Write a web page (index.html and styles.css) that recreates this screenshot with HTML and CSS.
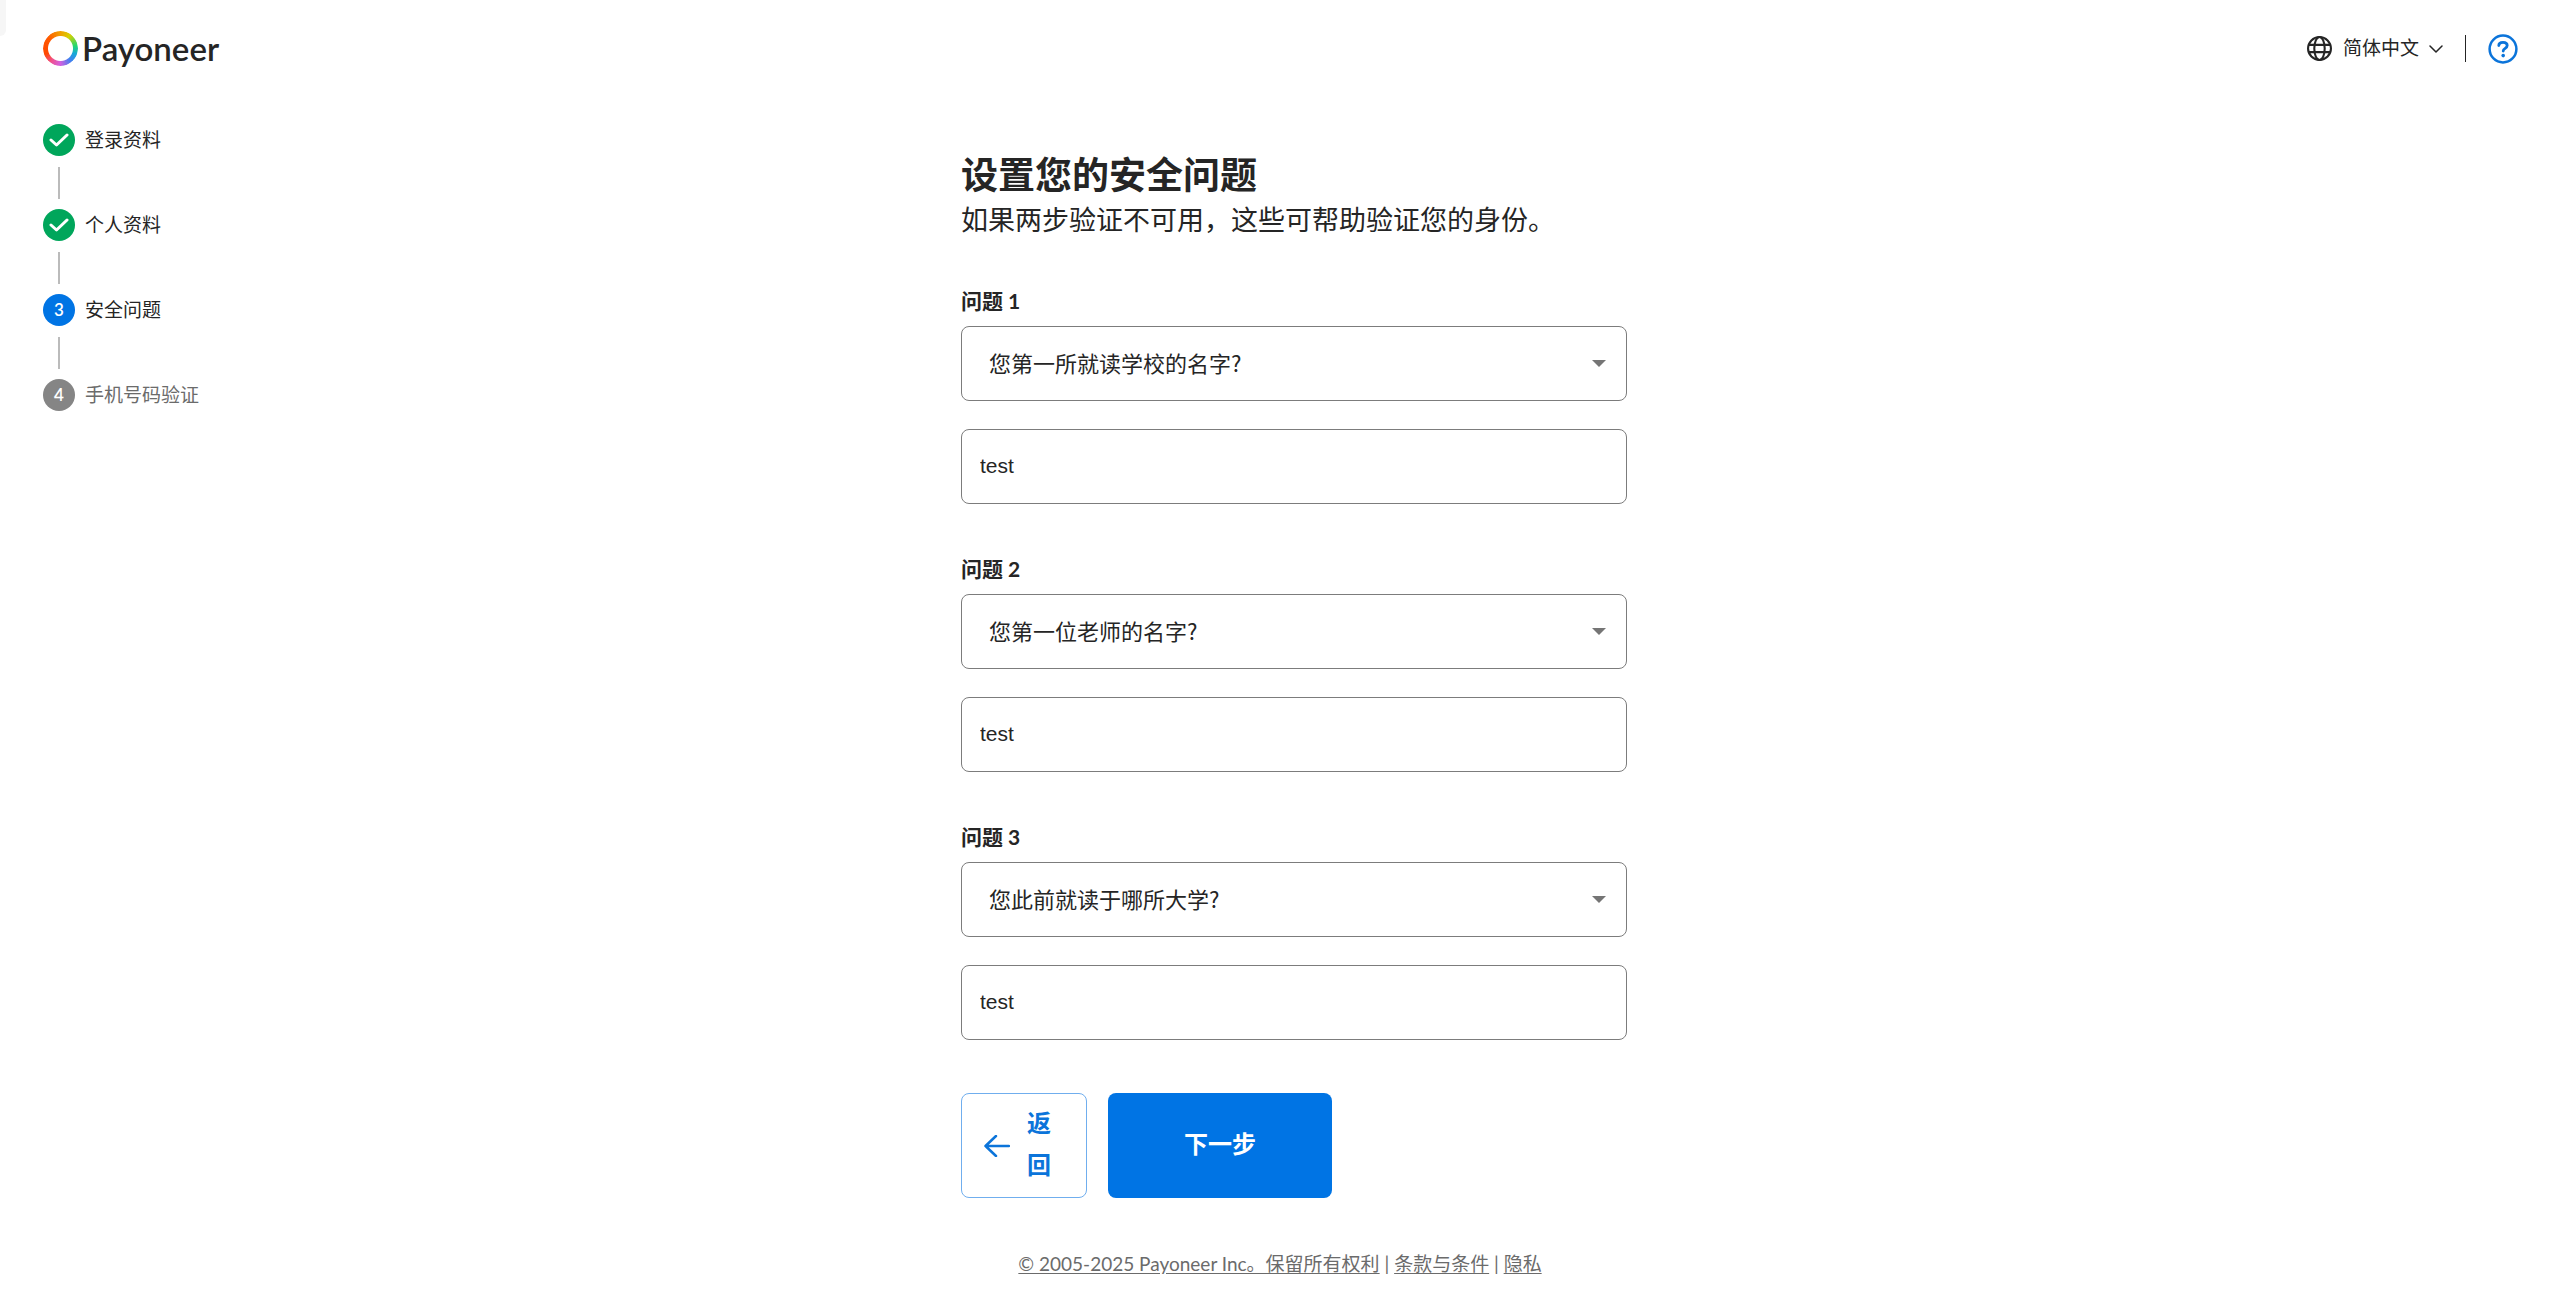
FILE: index.html
```
<!DOCTYPE html>
<html lang="zh-CN">
<head>
    <meta charset="UTF-8">
    <meta name="viewport" content="width=device-width, initial-scale=1.0">
    <title>Payoneer</title>
    <link rel="stylesheet" href="styles.css">
</head>
<body>
    <div class="corner-tab"></div>

    <!-- Header -->
    <header class="navbar">
        <a class="logo" href="/">
            <span class="logo-ring"></span>
            <span class="logo-text">Payoneer</span>
        </a>
        <div class="navbar-actions">
            <button class="language-btn" type="button">
                <svg class="globe-icon" viewBox="0 0 24 24" aria-hidden="true">
                    <circle cx="12" cy="12" r="11"/>
                    <ellipse cx="12" cy="12" rx="5" ry="11"/>
                    <path d="M2 8.500h20M2 15.500h20"/>
                </svg>
                <span class="language-name">简体中文</span>
                <svg class="chevron-icon" viewBox="0 0 14 8" aria-hidden="true">
                    <path d="M1 1l6 6 6-6"/>
                </svg>
            </button>
            <span class="divider"></span>
            <button class="help-btn" type="button" aria-label="帮助">
                <svg class="help-icon" viewBox="0 0 30 30" aria-hidden="true">
                    <circle cx="15" cy="15" r="13.4"/>
                    <path class="help-curve" d="M10.800 11.600c0-2 1.700-3.200 4.200-3.200s4.200 1.200 4.200 3.200c0 2.700-4 2.700-4 5.400"/>
                    <circle class="help-dot" cx="15.2" cy="21.6" r="1.8"/>
                </svg>
            </button>
        </div>
    </header>

    <div class="page">
        <!-- Progress steps -->
        <ol class="steps">
            <li class="step done">
                <span class="step-icon">
                    <svg class="check-icon" viewBox="0 0 20 16" aria-hidden="true"><path d="M2 8l5.500 5L18 3"/></svg>
                </span>
                <span>登录资料</span>
            </li>
            <li class="step done">
                <span class="step-icon">
                    <svg class="check-icon" viewBox="0 0 20 16" aria-hidden="true"><path d="M2 8l5.500 5L18 3"/></svg>
                </span>
                <span>个人资料</span>
            </li>
            <li class="step current">
                <span class="step-icon">3</span>
                <span>安全问题</span>
            </li>
            <li class="step pending">
                <span class="step-icon">4</span>
                <span>手机号码验证</span>
            </li>
        </ol>

        <!-- Security questions -->
        <main>
            <h1>设置您的安全问题</h1>
            <p class="subtitle">如果两步验证不可用，这些可帮助验证您的身份。</p>

            <form>
                <div class="question">
                    <label for="question-1">问题 1</label>
                    <div class="select-box">
                        <select id="question-1">
                            <option>您第一所就读学校的名字?</option>
                        </select>
                    </div>
                    <input type="text" value="test" aria-label="问题 1 答案">
                </div>
                <div class="question">
                    <label for="question-2">问题 2</label>
                    <div class="select-box">
                        <select id="question-2">
                            <option>您第一位老师的名字?</option>
                        </select>
                    </div>
                    <input type="text" value="test" aria-label="问题 2 答案">
                </div>
                <div class="question">
                    <label for="question-3">问题 3</label>
                    <div class="select-box">
                        <select id="question-3">
                            <option>您此前就读于哪所大学?</option>
                        </select>
                    </div>
                    <input type="text" value="test" aria-label="问题 3 答案">
                </div>

                <div class="buttons">
                    <button class="back-btn" type="button">
                        <svg class="arrow-icon" viewBox="0 0 26 22" aria-hidden="true">
                            <path d="M25 11H1.500M12 1L1.500 11 12 21"/>
                        </svg>
                        <span class="back-text">返回</span>
                    </button>
                    <button class="next-btn" type="submit">下一步</button>
                </div>
            </form>
        </main>
    </div>

    <footer>
        <a href="/legal">© 2005-2025 Payoneer Inc。保留所有权利</a> | <a href="/terms">条款与条件</a> | <a href="/privacy">隐私</a>
    </footer>
</body>
</html>
```
FILE: styles.css
```
* {
    margin: 0;
    padding: 0;
    box-sizing: border-box;
}

body {
    font-family: Lato, "Noto Sans CJK SC", sans-serif;
    font-size: 19px;
    color: #252525;
    background-color: #fff;
}

button {
    font-family: inherit;
    color: inherit;
    background: none;
    border: none;
    cursor: pointer;
}

svg {
    display: block;
    fill: none;
    stroke: currentColor;
    stroke-linecap: round;
    stroke-linejoin: round;
}

.corner-tab {
    position: absolute;
    top: 0;
    left: 0;
    width: 6px;
    height: 36px;
    background-color: #f6f6f6;
    border-bottom-right-radius: 6px;
}

/* Header */
.navbar {
    display: flex;
    justify-content: space-between;
    align-items: center;
    height: 97px;
    padding: 0 42px 0 43px;
}

.logo {
    display: flex;
    align-items: center;
    gap: 4px;
    color: #252525;
    text-decoration: none;
}

.logo-ring {
    width: 35px;
    height: 35px;
    border-radius: 50%;
    background: conic-gradient(#f0a000, #d8d000 35deg, #20d870 80deg, #18a8d8 110deg, #4080f0 140deg, #d060e0 180deg, #f05090 215deg, #ff4800 250deg, #ff5800 310deg, #f0a000);
    mask: radial-gradient(circle, transparent 12px, #000 13px);
}

.logo-text {
    padding-bottom: 2px;
    font-size: 33px;
    font-weight: 600;
    line-height: 36px;
}

.navbar-actions {
    display: flex;
    align-items: center;
}

.language-btn {
    display: flex;
    align-items: center;
    font-size: 19px;
    line-height: 28px;
}

.language-name {
    padding-bottom: 2px;
}

.globe-icon {
    width: 25px;
    height: 25px;
    margin-right: 11px;
    stroke-width: 2;
}

.chevron-icon {
    width: 14px;
    height: 8px;
    margin-left: 10px;
    stroke-width: 1.5;
}

.divider {
    width: 1px;
    height: 27px;
    margin: 0 22px;
    background-color: #252525;
}

.help-btn {
    color: #0b74da;
}

.help-icon {
    width: 30px;
    height: 30px;
    stroke-width: 2.5;
}

.help-curve {
    stroke-width: 2.8;
}

.help-dot {
    fill: currentColor;
    stroke: none;
}

.page {
    display: grid;
    grid-template-columns: 1fr minmax(auto, 666px) 1fr;
    padding: 0 15px 0 43px;
}

/* Progress steps */
.steps {
    padding-top: 27px;
    list-style: none;
}

.step {
    display: grid;
    grid-template-columns: 32px 1fr;
    align-items: center;
    column-gap: 10px;
    line-height: 32px;
}

.step:not(:last-child)::after {
    content: "";
    justify-self: center;
    width: 2px;
    height: 32px;
    margin: 11px 0 10px;
    background-color: #bbb;
}

.step-icon {
    display: flex;
    justify-content: center;
    align-items: center;
    width: 32px;
    height: 32px;
    border-radius: 50%;
    color: #fff;
    font-size: 17px;
    font-weight: 600;
}

.check-icon {
    width: 20px;
    height: 16px;
    stroke-width: 3;
}

.done .step-icon {
    background-color: #00a65b;
}

.current .step-icon {
    background-color: #0074e4;
}

.pending {
    color: #6b6b6b;
}

.pending .step-icon {
    background-color: #858585;
}

/* Security questions */
main {
    padding-top: 52px;
}

h1 {
    font-size: 37px;
    line-height: 52px;
}

.subtitle {
    font-size: 27px;
    line-height: 38px;
}

form {
    padding-top: 46px;
}

.question {
    display: flex;
    flex-direction: column;
    margin-bottom: 49px;
}

.question label {
    margin-bottom: 9px;
    font-size: 21px;
    font-weight: bold;
    line-height: 32px;
}

.select-box {
    position: relative;
    margin-bottom: 28px;
}

.select-box::after {
    content: "";
    position: absolute;
    top: 34px;
    right: 21px;
    border: 7px solid transparent;
    border-top-color: #757575;
    border-bottom: none;
    pointer-events: none;
}

select,
input {
    display: block;
    width: 100%;
    height: 75px;
    border: 1px solid #7c7c7c;
    border-radius: 8px;
    background-color: #fff;
    color: #252525;
}

select {
    appearance: none;
    padding: 0 48px 4px 27px;
    font-family: "Noto Sans CJK SC", sans-serif;
    font-size: 22px;
}

input {
    padding: 0 18px 2px;
    font-family: "Liberation Sans", Arial, sans-serif;
    font-size: 21px;
}

.buttons {
    display: flex;
    gap: 21px;
    padding-top: 4px;
}

.back-btn,
.next-btn {
    height: 105px;
    border-radius: 8px;
    font-size: 24px;
    font-weight: bold;
    line-height: 42px;
}

.back-btn {
    display: flex;
    align-items: center;
    gap: 17px;
    padding: 0 35px 0 22px;
    border: 1px solid #70aeee;
    color: #0b74da;
}

.arrow-icon {
    width: 26px;
    height: 22px;
    stroke-width: 2.5;
}

.back-text {
    width: 24px;
    padding-bottom: 4px;
}

.next-btn {
    padding: 0 76px 4px;
    background-color: #0074e4;
    color: #fff;
}

/* Footer */
footer {
    padding: 51px 0 16px;
    text-align: center;
    line-height: 30px;
    color: #6b6b6b;
}

footer a {
    color: inherit;
    text-underline-offset: 2px;
}
```
